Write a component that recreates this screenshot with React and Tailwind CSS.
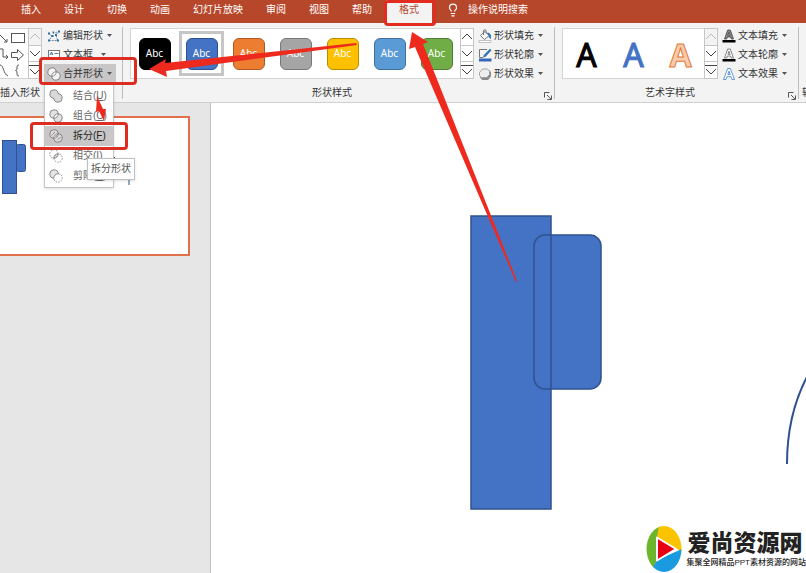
import { useState } from 'react'
import clsx from 'clsx'
import { Lightbulb } from 'lucide-react'

const tabs = ['插入', '设计', '切换', '动画', '幻灯片放映', '审阅', '视图', '帮助']

const shapeStyles = [
  { name: '黑色', color: 'bg-black border-black' },
  { name: '蓝色', color: 'bg-[#4472c4] border-[#2f528f]' },
  { name: '橙色', color: 'bg-[#ed7d31] border-[#ae5a21]' },
  { name: '灰色', color: 'bg-[#a5a5a5] border-[#787878]' },
  { name: '金色', color: 'bg-[#ffc000] border-[#bc8c00]' },
  { name: '浅蓝', color: 'bg-[#5b9bd5] border-[#41719c]' },
  { name: '绿色', color: 'bg-[#70ad47] border-[#507e32]' },
]

const mergeItems = [
  { label: '结合', shortcut: 'U', kind: 'union' },
  { label: '组合', shortcut: 'C', kind: 'combine' },
  { label: '拆分', shortcut: 'F', kind: 'fragment' },
  { label: '相交', shortcut: 'I', kind: 'intersect' },
  { label: '剪除', shortcut: 'S', kind: 'subtract' },
]

const LENS = 'M4.8 9.2A4.2 4.2 0 0 0 9.2 4.8A4.2 4.2 0 0 0 4.8 9.2Z'
const UNION = 'M9.2 4.8A4.2 4.2 0 1 0 4.8 9.2A4.2 4.2 0 1 0 9.2 4.8Z'

function MergeIcon({ kind }) {
  return (
    <svg viewBox="0 0 14 14" className="size-3.5 shrink-0" fill="none" stroke="#707070" strokeWidth="0.8">
      {kind === 'union' && <path d={UNION} fill="#d9d9d9" />}
      {kind === 'outline' && (
        <>
          <path d={UNION} fill="#f3f3f3" />
          <path d={LENS} fill="#fff" />
        </>
      )}
      {kind === 'combine' && (
        <>
          <path d={UNION} fill="#e2e2e2" />
          <path d={LENS} fill="#fff" />
        </>
      )}
      {kind === 'fragment' && (
        <>
          <path d={UNION} fill="#dedede" />
          <path d={LENS} fill="#f3f3f3" />
          <path d="M2.500 6.500 6 3M6.500 8l2-2.500M8.500 11l3-3" />
        </>
      )}
      {kind === 'intersect' && (
        <>
          <path d={UNION} strokeDasharray="1.5 1.2" />
          <path d={LENS} fill="#d9d9d9" />
        </>
      )}
      {kind === 'subtract' && (
        <>
          <path d="M9.2 4.8A4.2 4.2 0 1 0 4.8 9.2A4.2 4.2 0 0 1 9.2 4.8Z" fill="#e6e6e6" />
          <path d="M9.2 4.8A4.2 4.2 0 1 1 4.8 9.2" strokeDasharray="1.5 1.2" />
        </>
      )}
    </svg>
  )
}

function EditShapeIcon() {
  return (
    <svg viewBox="0 0 14 14" className="size-3.5 shrink-0" fill="none" stroke="#5a7f9f">
      <path d="M2 4.500 5 7 2 11.500h8.500L9 6l3-3.500L6 4.500" strokeDasharray="2 1" strokeWidth="0.9" />
      <path d="M1 3.500h2v2H1zM11 1.500h2v2h-2zM1 10.500h2v2H1zM10 10.500h2v2h-2zM4.500 6h2v2h-2zM8 5h2v2H8zM5.500 2.500h1.500v1.500H5.500z" fill="#2f6f9f" stroke="none" />
    </svg>
  )
}

function TextBoxIcon() {
  return (
    <svg viewBox="0 0 14 14" className="size-3.5 shrink-0" fill="none" stroke="#777">
      <rect x="1.500" y="2.500" width="11" height="9" fill="#fff" />
      <path d="m3 7 1.500-3L6 7M3.500 6h2" stroke="#2f6fb5" strokeWidth="0.9" />
      <path d="M7.500 5.500h4M3 9.500h8.500" />
    </svg>
  )
}

function FillIcon() {
  return (
    <svg viewBox="0 0 14 14" className="size-3.5 shrink-0" fill="none" stroke="#666" strokeWidth="0.9">
      <path d="m2.500 6.500 4.500-4 4 4-4.500 4Z" fill="#fff" />
      <path d="M5.500 6V2a1.300 1.300 0 0 1 2.600 0v2.500" />
      <path d="M9.500 4c2.500 0 3.500 2 3 5.500-1-.5-1.500-1.500-1.500-3Z" fill="#2f75b5" stroke="#2f75b5" />
      <path d="M1 11.500h12v2H1z" fill="#fff" stroke="#bbb" />
    </svg>
  )
}

function OutlineIcon() {
  return (
    <svg viewBox="0 0 14 14" className="size-3.5 shrink-0" fill="none">
      <path d="M9 1.500H1.500v8H5" stroke="#777" />
      <path d="m5 9.500.8-2.600L12 .8l1.500 1.500L7.600 8.700Z" fill="#2f75b5" />
      <path d="M1 10.500h12.500v3H1z" fill="#3366bb" />
    </svg>
  )
}

function EffectIcon() {
  return (
    <svg viewBox="0 0 14 14" className="size-3.5 shrink-0">
      <path d="M10.500 3 13 5v4.500L10 13H4.500L1.500 10.500l8-1Z" fill="#8a8a8a" />
      <path d="M4.500 2h5L11.500 4v3.500L9 10.500H3.500L1.500 8.500V5.500Z" fill="#eee" stroke="#999" strokeWidth="0.9" />
    </svg>
  )
}

// Small "A" mark used by the three text buttons
function LetterIcon({ kind }) {
  const paint = {
    fill: { fill: '#888', stroke: '#444' },
    outline: { fill: '#fff', stroke: '#666' },
    effect: { fill: '#fff', stroke: '#3f7fd0' },
  }[kind]
  return (
    <svg viewBox="0 0 14 14" className="size-3.5 shrink-0">
      <path
        d={kind === 'effect' ? 'M1.500 12.500 5.700 1.500h2.600l4.200 11H10l-1-2.800H5l-1 2.800ZM5.800 7.500h2.400L7 4.200Z' : 'M2.500 10 5.700 1h2.600l3.200 9H9.300L8.700 8H5.300L4.700 10ZM5.900 6.300h2.200L7 3.200Z'}
        fillRule="evenodd"
        strokeWidth="0.8"
        {...paint}
      />
      {kind !== 'effect' && <path d="M.5 11h13v2.500H.5z" fill="#000" />}
    </svg>
  )
}

function Caret() {
  return (
    <svg viewBox="0 0 5 3" className="ml-0.5 h-[3px] w-[5px] shrink-0" fill="#555">
      <path d="M0 0h5L2.500 3Z" />
    </svg>
  )
}

function RibbonButton({ icon, children, labelClass, className }) {
  return (
    <button type="button" className={clsx('flex h-[19px] items-center gap-0.5 whitespace-nowrap', className)}>
      {icon}
      <span className={labelClass}>{children}</span>
      <Caret />
    </button>
  )
}

function Scroller({ topDisabled }) {
  return (
    <div className="flex h-[51px] w-3.5 shrink-0 flex-col border border-[#c6c6c6] bg-white">
      <button type="button" aria-label="上一行" className={clsx('grid flex-1 place-items-center', topDisabled ? 'bg-[#f3f3f3] text-[#bbb]' : 'text-[#444]')}>
        <svg viewBox="0 0 12 7" className="h-[7px] w-3" fill="none" stroke="currentColor"><path d="m1 6 5-5 5 5" /></svg>
      </button>
      <button type="button" aria-label="下一行" className="grid flex-1 place-items-center border-y border-[#c6c6c6] text-[#444]">
        <svg viewBox="0 0 12 7" className="h-[7px] w-3" fill="none" stroke="currentColor"><path d="m1 1 5 5 5-5" /></svg>
      </button>
      <button type="button" aria-label="其他" className="grid flex-1 place-items-center text-[#444]">
        <svg viewBox="0 0 12 12" className="size-3" fill="none" stroke="currentColor"><path d="M0 1.500h12M1 5l5 5 5-5" /></svg>
      </button>
    </div>
  )
}

function Group({ label, launcher, children, className, labelClass }) {
  return (
    <section className={clsx('flex shrink-0 flex-col', className)}>
      <div className="flex h-[61px] items-start">{children}</div>
      <div className="relative flex h-[18px] items-center">
        <h2 className={clsx('flex-1', labelClass)}>{label}</h2>
        {launcher && (
          <button type="button" aria-label={label + '选项'} className="absolute right-0.5 bottom-0.5">
            <svg viewBox="0 0 8 8" className="size-2" fill="none" stroke="#555">
              <path d="M.5 5.500v-5h5M3 3l4 4M7.500 3.500v4h-4" />
            </svg>
          </button>
        )}
      </div>
    </section>
  )
}

function Divider() {
  return <div className="mt-1 h-[72px] w-px shrink-0 bg-[#bdbdbd]" />
}

function MergeMenu({ selected, onSelect }) {
  return (
    <ul className="absolute top-full left-0 w-[70px] border border-[#c6c6c6] bg-white pt-0.5 pb-px text-[#666] shadow">
      {mergeItems.map((item) => (
        <li key={item.kind} className="relative">
          <button
            type="button"
            onClick={() => onSelect(item.kind)}
            className={clsx('flex h-5 w-full items-center gap-2.5 pl-1 whitespace-nowrap', selected === item.kind && 'bg-[#c8c6c6] text-[#222]')}
          >
            <MergeIcon kind={item.kind} />
            <span>{item.label}(<u>{item.shortcut}</u>)</span>
          </button>
          {item.kind === 'fragment' && (
            <>
              <div className="absolute -top-1 -left-[15px] h-7 w-[98px] rounded-sm border-3 border-[#dc2d22]" />
              <div role="tooltip" className="absolute top-8 left-[42px] z-10 border border-[#c0c0c0] bg-white px-[3px] leading-5 whitespace-nowrap text-[#555] shadow-sm">
                拆分形状
              </div>
            </>
          )}
        </li>
      ))}
    </ul>
  )
}

function TabBar() {
  return (
    <header className="relative z-20 flex h-[23px] items-end bg-[#b7472a] text-white">
      <nav className="flex h-full shrink-0 gap-px pl-2.5">
        {tabs.map((tab) => (
          <button key={tab} type="button" className="px-[11px] pb-1 whitespace-nowrap">{tab}</button>
        ))}
        <div className="relative ml-0.5">
          <button type="button" className="h-full bg-[#f3f3f3] px-[13px] pb-1 whitespace-nowrap text-[#b7472a]">格式</button>
          <div className="absolute top-0 -right-1 -bottom-[3px] -left-0.5 rounded-sm border-3 border-[#e32b20]" />
        </div>
      </nav>
      <div className="flex h-full items-center gap-2 pb-1 pl-3.5">
        <Lightbulb className="size-3.5" strokeWidth={2} />
        <input type="text" aria-label="操作说明搜索" placeholder="操作说明搜索" className="h-5 w-24 bg-transparent outline-none placeholder:text-white" />
      </div>
    </header>
  )
}

function Ribbon() {
  const [style, setStyle] = useState('蓝色')
  const [merge, setMerge] = useState('fragment')

  return (
    <div className="relative z-10 flex border-b border-[#cfcfcf] bg-[#f3f3f3] text-[#333]">
      <Group label="插入形状" className="w-[122px]">
        <div className="mt-[5px] flex">
          <div className="h-[51px] w-7 border-y border-[#d5d5d5] bg-white">
            <svg viewBox="0 0 28 49" className="h-full w-full" fill="none" stroke="#555">
              <path d="m0 6 7 7M4 13h3v-3" />
              <rect x="11.500" y="4.500" width="13" height="9" />
              <path d="M0 20h3v8h5M6 26l2 2-2 2" />
              <path d="M11.500 23.500h6v-3l6 5.500-6 5.500v-3h-6Z" />
              <path d="M0 36c4 0 3 9 8 11M19 36c-2 0-2 1-2 3s0 2-1.500 2.500c1.500.5 1.500.5 1.500 2.500s0 3 2 3" />
            </svg>
          </div>
          <Scroller topDisabled />
        </div>
        <div className="mt-[3px] ml-0.5">
          <RibbonButton icon={<EditShapeIcon />} className="pl-[3px]">编辑形状</RibbonButton>
          <RibbonButton icon={<TextBoxIcon />} className="pl-[3px]" labelClass="pr-1">文本框</RibbonButton>
          <div className="relative">
            <RibbonButton icon={<MergeIcon kind="outline" />} className="w-[72px] bg-[#c8c6c6] pl-[3px]">合并形状</RibbonButton>
            <MergeMenu selected={merge} onSelect={setMerge} />
            <div className="absolute -top-[7px] -left-[5px] h-7 w-[98px] rounded-sm border-3 border-[#dc2d22]" />
          </div>
        </div>
      </Group>
      <Divider />

      <Group label="形状样式" launcher className="pl-[7px]" labelClass="pr-5 text-center">
        <div className="mt-[5px] flex">
          <div className="flex h-[51px] border border-r-0 border-[#d5d5d5] bg-white">
            {shapeStyles.map((s) => (
              <button
                key={s.name}
                type="button"
                aria-label={s.name}
                onClick={() => setStyle(s.name)}
                className={clsx('mx-px my-0.5 grid w-[45px] place-items-center border-3', style === s.name ? 'border-[#c6c6c6]' : 'border-transparent')}
              >
                <span className={clsx("grid size-8 place-items-center rounded-md border pb-0.5 font-['Noto_Sans'] text-white", s.color)}>Abc</span>
              </button>
            ))}
          </div>
          <Scroller />
        </div>
        <div className="mt-[3px] ml-1 pr-[11px]">
          <RibbonButton icon={<FillIcon />}>形状填充</RibbonButton>
          <RibbonButton icon={<OutlineIcon />}>形状轮廓</RibbonButton>
          <RibbonButton icon={<EffectIcon />}>形状效果</RibbonButton>
        </div>
      </Group>
      <Divider />

      <Group label="艺术字样式" launcher className="pl-[7px]" labelClass="pr-5 text-center">
        <div className="mt-[5px] flex">
          <div className="flex h-[51px] border border-r-0 border-[#d5d5d5] bg-white font-['Noto_Sans'] text-[32px] leading-none">
            <button type="button" className="w-[47px] pt-0.5 text-black [-webkit-text-stroke:1px_#000]">A</button>
            <button type="button" className="w-[47px] pt-0.5 text-[#4472c4] [-webkit-text-stroke:1px_#4472c4]">A</button>
            <button type="button" className="w-[47px] pt-0.5 font-bold text-[#f8cbad] [-webkit-text-stroke:1px_#e07b39]">A</button>
          </div>
          <Scroller topDisabled />
        </div>
        <div className="mt-[3px] ml-1 pr-[11px]">
          <RibbonButton icon={<LetterIcon kind="fill" />}>文本填充</RibbonButton>
          <RibbonButton icon={<LetterIcon kind="outline" />}>文本轮廓</RibbonButton>
          <RibbonButton icon={<LetterIcon kind="effect" />}>文本效果</RibbonButton>
        </div>
      </Group>
      <Divider />
      <div className="flex min-w-0 flex-1 items-end overflow-hidden pb-px pl-[3px] leading-4 whitespace-nowrap">辅助功能</div>
    </div>
  )
}

function SlidePanel() {
  return (
    <aside className="w-[211px] shrink-0 border-r border-[#bfbfbf] bg-[#e6e6e6] pt-[13px] pr-5">
      <div className="h-[140px] border-2 border-l-0 border-[#e0714c] bg-white">
        <svg className="h-full w-full" fill="#4472c4" stroke="#2f528f">
          <rect x="16.500" y="26.500" width="9" height="27" rx="2" />
          <rect x="2.500" y="22.500" width="14" height="53" />
          <path d="M129 60v7M113 38l3 3" />
        </svg>
      </div>
    </aside>
  )
}

function Logo() {
  return (
    <div className="absolute right-0 bottom-0 flex items-center gap-1 text-[#222]">
      <svg viewBox="0 0 36 48" className="h-12 w-9 shrink-0">
        <clipPath id="oval"><ellipse cx="18" cy="24" rx="17.500" ry="23" /></clipPath>
        <g clipPath="url(#oval)">
          <path d="M0 0h15l-4 34L6 48H0Z" fill="#6cb52d" />
          <path d="M13 0h23v27L11 12Z" fill="#fcc400" />
          <path d="M36 24v24H4l7-13Z" fill="#1a9be0" />
        </g>
        <path d="M11 12.500v23L30 24Z" fill="#e60012" stroke="#fff" strokeWidth="2" strokeLinejoin="round" />
      </svg>
      <div className="whitespace-nowrap">
        <p className="pl-px text-[23px] leading-7 font-black">爱尚资源网</p>
        <p className="text-[8px] leading-3 font-medium">集聚全网精品PPT素材资源的网站</p>
      </div>
    </div>
  )
}

function Canvas() {
  return (
    <main className="relative min-w-0 flex-1 overflow-hidden bg-white">
      <svg className="absolute inset-0 h-full w-full" stroke="#2f528f" strokeWidth="1.500">
        <rect x="260" y="113" width="80" height="293" fill="#4472c4" />
        <rect x="323" y="132" width="67" height="154" rx="11" fill="#4472c4" />
        <path d="M340 132v154" />
        <path d="M576 361c0-34 7-64 22-91" fill="none" strokeWidth="2" />
      </svg>
      <Logo />
    </main>
  )
}

function Arrows() {
  return (
    <svg className="pointer-events-none absolute inset-0 z-30 h-full w-full" fill="#ee2a1e">
      <path d="m149 69 17-10-1 4 191-20 1 2-191 26 1 6Z" />
      <path d="m412 32-3 17 6-2 101 235 1-1-94-237 5-2Z" />
      <path d="m97 96-1 16 3-1 5 10 2-12h-3Z" />
    </svg>
  )
}

export default function App() {
  return (
    <div className="relative flex min-h-screen flex-col overflow-hidden font-['Liberation_Sans','Noto_Sans_CJK_SC',sans-serif] text-[10px] leading-4">
      <TabBar />
      <Ribbon />
      <div className="flex flex-1">
        <SlidePanel />
        <Canvas />
      </div>
      <Arrows />
    </div>
  )
}
